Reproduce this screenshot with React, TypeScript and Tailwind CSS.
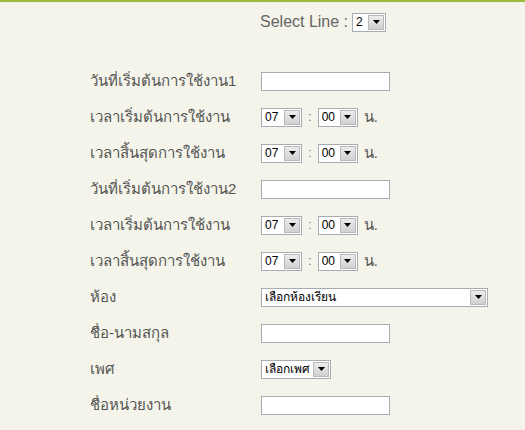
import React from 'react';

const Arrow = () => (
  <div className="flex h-full w-[16px] items-center justify-center border border-[#b8b8b8] bg-gradient-to-b from-[#ececec] to-[#d0d0d0]">
    <svg width="7" height="4" viewBox="0 0 7 4">
      <polygon points="0,0 7,0 3.5,4" fill="#000" />
    </svg>
  </div>
);

const Select = ({ value, width }: { value: string; width: string }) => (
  <div className={`flex h-[19px] ${width} items-center border border-[#a5acb2] bg-white`}>
    <span className="flex-1 whitespace-nowrap pl-[3px] text-[12px] leading-none text-black">{value}</span>
    <div className="h-full p-[1px]">
      <Arrow />
    </div>
  </div>
);

const TextBox = () => <div className="h-[19px] w-[129px] border border-[#a5acb2] bg-white" />;

const TimeRow = () => (
  <div className="flex items-center">
    <Select value="07" width="w-[41px]" />
    <span className="mx-[6px] text-[13px] text-[#777]">:</span>
    <Select value="00" width="w-[40px]" />
    <span className="ml-[6px] text-[15px] text-[#555]">น.</span>
  </div>
);

const Row = ({ label, children }: { label: string; children: React.ReactNode }) => (
  <div className="flex h-[36px] items-center">
    <div className="w-[171px] text-[15px] text-[#555]">{label}</div>
    {children}
  </div>
);

export default function App() {
  return (
    <div
      className="h-[430px] w-[525px] overflow-hidden bg-[#f4f4ea]"
      style={{ fontFamily: 'Tahoma, "Liberation Sans", "Noto Sans", sans-serif' }}
    >
      <div className="h-[2px] bg-[#9cbb3c]" />
      <div className="h-[1px] bg-[#eef2dc]" />
      <div className="flex h-[38px] items-center pl-[260px]">
        <span className="text-[16px] text-[#666]">Select Line :</span>
        <div className="ml-[4px]">
          <Select value="2" width="w-[34px]" />
        </div>
      </div>
      <div className="pl-[90px] pt-[22px]">
        <Row label="วันที่เริ่มต้นการใช้งาน1">
          <TextBox />
        </Row>
        <Row label="เวลาเริ่มต้นการใช้งาน">
          <TimeRow />
        </Row>
        <Row label="เวลาสิ้นสุดการใช้งาน">
          <TimeRow />
        </Row>
        <Row label="วันที่เริ่มต้นการใช้งาน2">
          <TextBox />
        </Row>
        <Row label="เวลาเริ่มต้นการใช้งาน">
          <TimeRow />
        </Row>
        <Row label="เวลาสิ้นสุดการใช้งาน">
          <TimeRow />
        </Row>
        <Row label="ห้อง">
          <Select value="เลือกห้องเรียน" width="w-[227px]" />
        </Row>
        <Row label="ชื่อ-นามสกุล">
          <TextBox />
        </Row>
        <Row label="เพศ">
          <Select value="เลือกเพศ" width="w-[70px]" />
        </Row>
        <Row label="ชื่อหน่วยงาน">
          <TextBox />
        </Row>
      </div>
    </div>
  );
}
